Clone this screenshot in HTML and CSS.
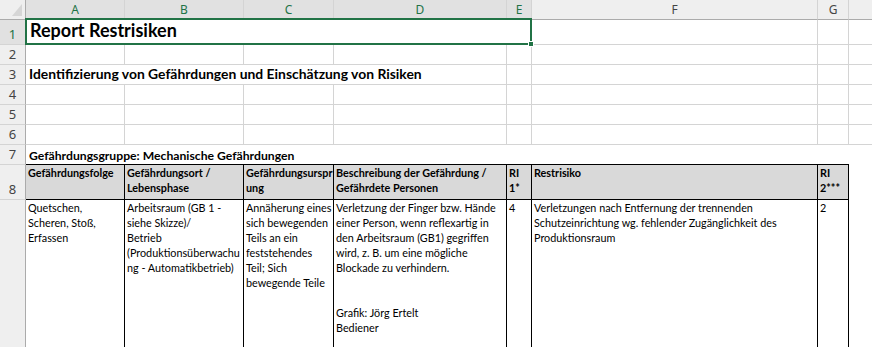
FILE: index.html
```html
<!DOCTYPE html>
<html lang="de">
<head>
<meta charset="utf-8">
<title>Report Restrisiken</title>
<link rel="stylesheet" href="styles.css">
</head>
<body>
<div class="sheet">
  <div class="corner"><svg class="tri" width="10" height="12" viewBox="0 0 10 12"><polygon points="10,0 10,12 0,12" fill="#d6d6d6"/></svg></div>
  <div class="ch sel">A</div>
  <div class="ch sel">B</div>
  <div class="ch sel">C</div>
  <div class="ch sel">D</div>
  <div class="ch sel">E</div>
  <div class="ch">F</div>
  <div class="ch">G</div>
  <div class="ch"></div>

  <div class="rh sel">1</div>
  <div class="c span5 selbox title">Report Restrisiken</div>
  <div class="c"></div><div class="c"></div><div class="c"></div>

  <div class="rh">2</div>
  <div class="c"></div><div class="c"></div><div class="c"></div><div class="c"></div><div class="c"></div><div class="c"></div><div class="c"></div><div class="c"></div>

  <div class="rh">3</div>
  <div class="c span4 sub">Identifizierung von Gefährdungen und Einschätzung von Risiken</div>
  <div class="c"></div><div class="c"></div><div class="c"></div><div class="c"></div>

  <div class="rh">4</div>
  <div class="c"></div><div class="c"></div><div class="c"></div><div class="c"></div><div class="c"></div><div class="c"></div><div class="c"></div><div class="c"></div>

  <div class="rh">5</div>
  <div class="c"></div><div class="c"></div><div class="c"></div><div class="c"></div><div class="c"></div><div class="c"></div><div class="c"></div><div class="c"></div>

  <div class="rh">6</div>
  <div class="c"></div><div class="c"></div><div class="c"></div><div class="c"></div><div class="c"></div><div class="c"></div><div class="c"></div><div class="c"></div>

  <div class="rh">7</div>
  <div class="c span7 grp">Gefährdungsgruppe: Mechanische Gefährdungen</div>
  <div class="c blank"></div>

  <div class="rh">8</div>
  <div class="t th">Gefährdungsfolge</div>
  <div class="t th">Gefährdungsort /<br>Lebensphase</div>
  <div class="t th">Gefährdungsurspr<br>ung</div>
  <div class="t th">Beschreibung der Gefährdung /<br>Gefährdete Personen</div>
  <div class="t th">RI<br>1*</div>
  <div class="t th">Restrisiko</div>
  <div class="t th">RI<br>2***</div>
  <div class="c blank"></div>

  <div class="rh"></div>
  <div class="t">Quetschen,<br>Scheren, Stoß,<br>Erfassen</div>
  <div class="t">Arbeitsraum (GB 1 -<br>siehe Skizze)/<br>Betrieb<br>(Produktionsüberwachu<br>ng - Automatikbetrieb)</div>
  <div class="t">Annäherung eines<br>sich bewegenden<br>Teils an ein<br>feststehendes<br>Teil; Sich<br>bewegende Teile</div>
  <div class="t">Verletzung der Finger bzw. Hände<br>einer Person, wenn reflexartig in<br>den Arbeitsraum (GB1) gegriffen<br>wird, z. B. um eine mögliche<br>Blockade zu verhindern.<br><br><br>Grafik: Jörg Ertelt<br>Bediener</div>
  <div class="t">4</div>
  <div class="t">Verletzungen nach Entfernung der trennenden<br>Schutzeinrichtung wg. fehlender Zugänglichkeit des<br>Produktionsraum</div>
  <div class="t">2</div>
  <div class="c blank"></div>
</div>
</body>
</html>
```
FILE: styles.css
```css
html, body {
  margin: 0;
  padding: 0;
  background: #ffffff;
  overflow: hidden;
}

.sheet {
  display: grid;
  grid-template-columns: 26px 99px 119px 90px 173px 25px 286px 31px 64px;
  grid-template-rows: 20px 25px 20px 20px 20px 20px 20px 20px 35px 160px;
  width: 913px;
  font-family: Lato, "Liberation Sans", sans-serif;
  color: #000;
}

.sheet > div {
  box-sizing: border-box;
  min-width: 0;
}

.corner {
  background: #efefef;
  border-right: 1px solid #ababab;
  border-bottom: 1px solid #ababab;
  display: flex;
  align-items: flex-end;
  justify-content: flex-end;
  padding: 0 3px 3px 0;
}

.tri {
  display: block;
}

.ch {
  background: #efefef;
  border-right: 1px solid #d4d4d4;
  border-bottom: 1px solid #ababab;
  font-family: "Noto Sans", "Open Sans", sans-serif;
  font-size: 12px;
  color: #444;
  display: flex;
  align-items: center;
  justify-content: center;
}

.ch.sel {
  background: #e1e1e1;
  color: #217346;
}

.rh {
  background: #efefef;
  border-right: 1px solid #ababab;
  border-bottom: 1px solid #d4d4d4;
  font-family: "Noto Sans", "Open Sans", sans-serif;
  font-size: 13px;
  line-height: 15px;
  color: #444;
  display: flex;
  align-items: flex-end;
  justify-content: center;
  padding-bottom: 2px;
}

.rh.sel {
  background: #e1e1e1;
  color: #217346;
}

.c {
  border-right: 1px solid #d4d4d4;
  border-bottom: 1px solid #d4d4d4;
  display: flex;
  align-items: flex-end;
  padding: 0 2px 2px 3px;
  white-space: nowrap;
  font-weight: 700;
}

.span4 { grid-column: span 4; }
.span5 { grid-column: span 5; }
.span7 { grid-column: span 7; }

.title {
  font-size: 18px;
  padding-left: 4px;
  padding-bottom: 3px;
}

.sub {
  font-size: 13.9px;
  padding-bottom: 2px;
}

.grp {
  font-size: 12.2px;
  border-right: none;
  border-bottom: 1px solid #000;
  padding-bottom: 1px;
}

.blank {
  border: none;
}

.selbox {
  position: relative;
}

.selbox::after {
  content: "";
  position: absolute;
  top: -2px;
  left: -1px;
  right: -1px;
  bottom: -1px;
  border: 2px solid #217346;
  z-index: 2;
}

.selbox::before {
  content: "";
  position: absolute;
  right: -3px;
  bottom: -3px;
  width: 4px;
  height: 4px;
  background: #217346;
  border: 1px solid #fff;
  z-index: 3;
}

.t {
  border-right: 1px solid #000;
  border-bottom: 1px solid #000;
  padding: 0 1px 0 2px;
  font-size: 10.8px;
  line-height: 15px;
  white-space: nowrap;
  overflow: hidden;
}

.th {
  background: #d9d9d9;
  font-weight: 700;
}
```
